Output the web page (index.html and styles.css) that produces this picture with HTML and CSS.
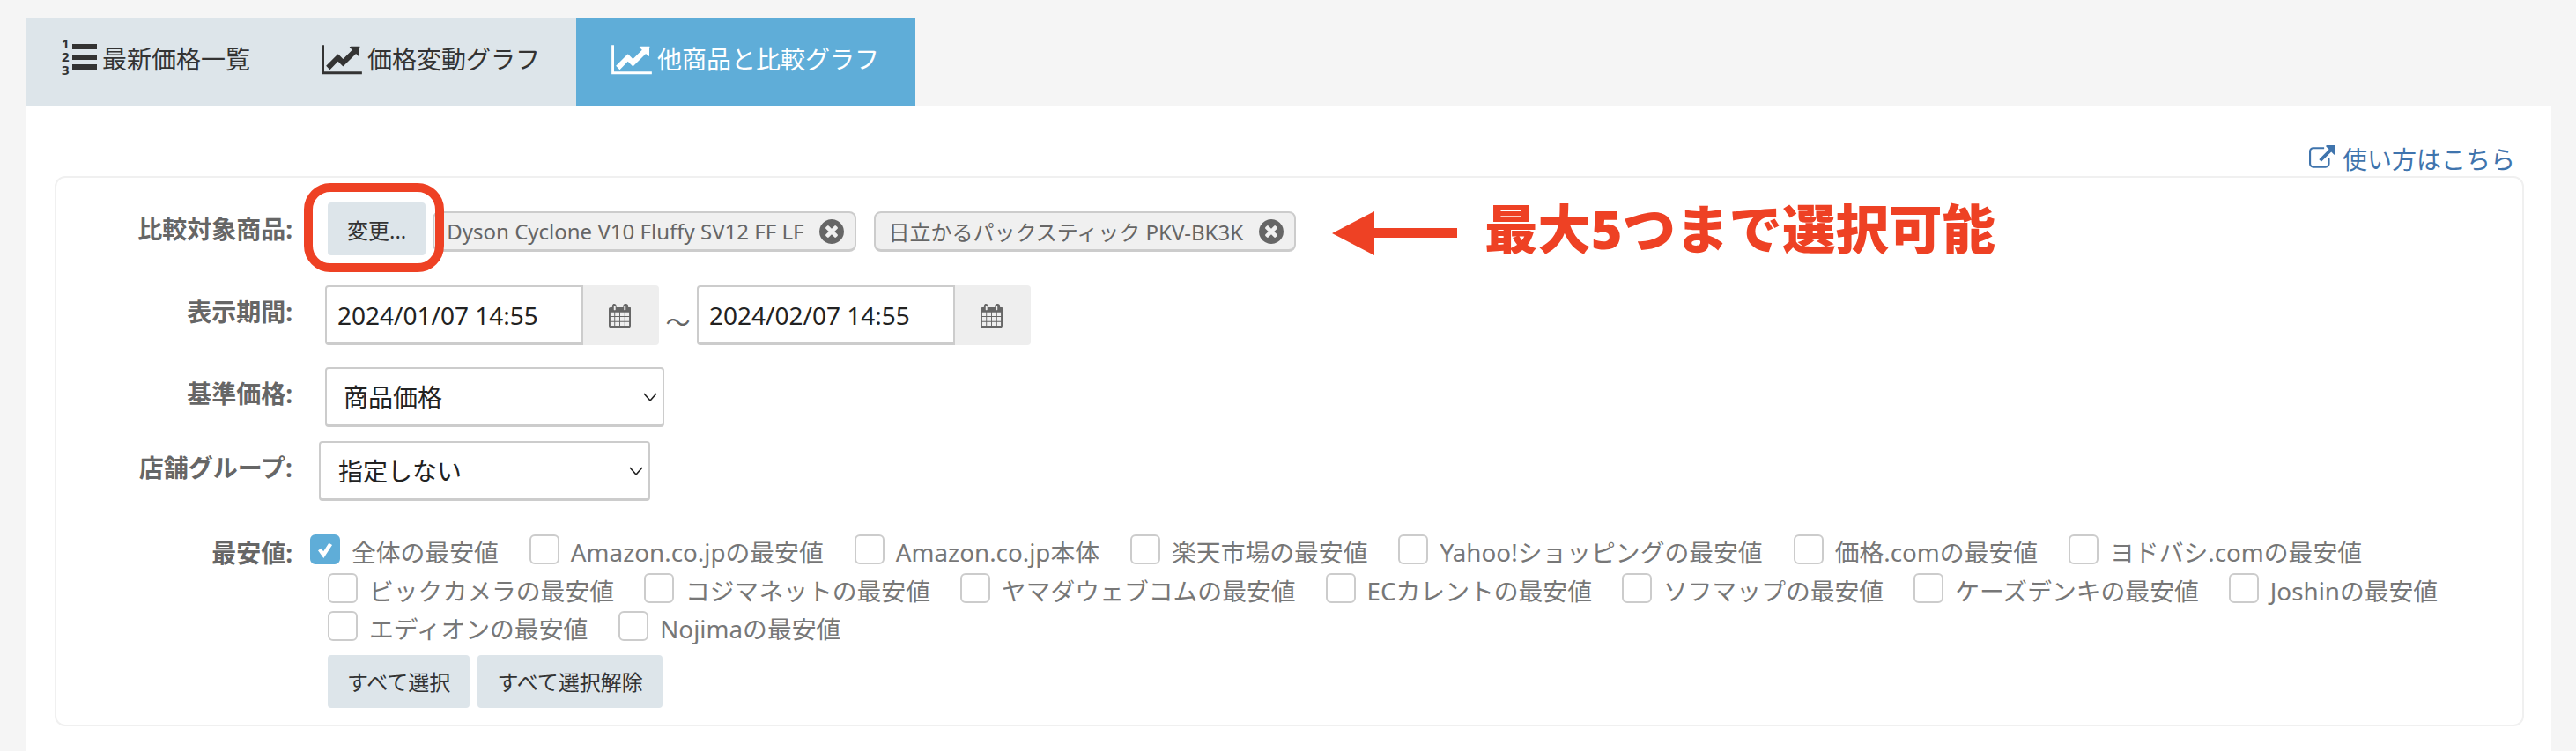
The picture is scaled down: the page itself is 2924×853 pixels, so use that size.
FILE: index.html
```html
<!DOCTYPE html>
<html lang="ja">
<head>
  <meta charset="UTF-8" />
  <title>他商品と比較グラフ</title>
  <link rel="stylesheet" href="styles.css">
</head>
<body>
  <svg class="icon-defs" width="0" height="0">
    <symbol id="i-chart" viewBox="0 0 2048 1792"><path d="M2048 1536v128H0V192h128v1344h1920zM1920 288v435q0 21-19.500 29.500T1865 745l-121-121-633 633q-10 10-23 10t-23-10L832 1024 416 1440l-192-192 585-585q10-10 23-10t23 10l233 233 464-464-121-121q-16-16-7.500-35.500T1491 256h435q14 0 23 9t9 23z"/></symbol>
    <symbol id="i-close" viewBox="128 128 1536 1536"><path d="M1277 1122q0-26-19-45L1077 896l181-181q19-19 19-45 0-27-19-46l-90-90q-19-19-46-19-26 0-45 19L896 715 715 534q-19-19-45-19-27 0-46 19l-90 90q-19 19-19 46 0 26 19 45l181 181-181 181q-19 19-19 45 0 27 19 46l90 90q19 19 46 19 26 0 45-19l181-181 181 181q19 19 45 19 27 0 46-19l90-90q19-19 19-46zm387-226q0 209-103 385.500T1281.500 1561 896 1664t-385.500-103T231 1281.500 128 896t103-385.500T510.500 231 896 128t385.500 103T1561 510.500 1664 896z"/></symbol>
    <symbol id="i-calendar" viewBox="0 0 1664 1792"><path d="M128 1664h288v-288H128v288zm352 0h320v-288H480v288zm-352-352h288V992H128v320zm352 0h320V992H480v320zM128 928h288V640H128v288zm736 736h320v-288H864v288zM480 928h320V640H480v288zm768 736h288v-288h-288v288zm-384-352h320V992H864v320zM512 448V160q0-13-9.500-22.500T480 128h-64q-13 0-22.500 9.500T384 160v288q0 13 9.500 22.500T416 480h64q13 0 22.500-9.500T512 448zm736 864h288V992h-288v320zM864 928h320V640H864v288zm384 0h288V640h-288v288zm32-480V160q0-13-9.500-22.500T1248 128h-64q-13 0-22.500 9.500T1152 160v288q0 13 9.500 22.500t22.500 9.500h64q13 0 22.500-9.500t9.500-22.500zm384-64v1280q0 52-38 90t-90 38H128q-52 0-90-38t-38-90V384q0-52 38-90t90-38h128v-96q0-66 47-113T352 0h64q66 0 113 47t47 113v96h512v-96q0-66 47-113t113-47h64q66 0 113 47t47 113v96h128q52 0 90 38t38 90z"/></symbol>
    <symbol id="i-chevron" viewBox="0 0 16 10"><path d="M1 1l7 8 7-8" fill="none" stroke="#222" stroke-width="1.6"/></symbol>
  </svg>

  <div class="page">
    <div class="tabs">
      <a class="tab">
        <svg class="tab-icon list-icon" viewBox="0 0 40 40">
          <text x="0" y="8" class="list-num">1</text>
          <text x="0" y="23" class="list-num">2</text>
          <text x="0" y="38" class="list-num">3</text>
          <rect x="12" y="3" width="28" height="6"/>
          <rect x="12" y="15" width="28" height="6"/>
          <rect x="12" y="26" width="28" height="6"/>
        </svg>
        最新価格一覧
      </a>
      <a class="tab">
        <svg class="tab-icon"><use href="#i-chart"/></svg>
        価格変動グラフ
      </a>
      <a class="tab active">
        <svg class="tab-icon"><use href="#i-chart"/></svg>
        他商品と比較グラフ
      </a>
    </div>

    <div class="panel">
      <div class="help-row">
        <a class="help-link">
          <svg class="help-icon" viewBox="0 0 1792 1792"><path d="M1408 928v320q0 119-84.500 203.500T1120 1536H288q-119 0-203.500-84.500T0 1248V416q0-119 84.500-203.500T288 128h704q14 0 23 9t9 23v64q0 14-9 23t-23 9H288q-66 0-113 47t-47 113v832q0 66 47 113t113 47h832q66 0 113-47t47-113V928q0-14 9-23t23-9h64q14 0 23 9t9 23zm384-864v512q0 26-19 45t-45 19-45-19l-176-176-652 652q-10 10-23 10t-23-10L695 983q-10-10-10-23t10-23l652-652-176-176q-19-19-19-45t19-45 45-19h512q26 0 45 19t19 45z"/></svg>
          使い方はこちら
        </a>
      </div>

      <div class="box">
        <div class="row row-items">
          <label class="field-label">比較対象商品:</label>
          <div class="change-wrap">
            <button class="btn">変更...</button>
            <span class="red-ring"></span>
          </div>
          <span class="chip">Dyson Cyclone V10 Fluffy SV12 FF LF<svg class="chip-x"><use href="#i-close"/></svg></span>
          <span class="chip">日立かるパックスティック PKV-BK3K<svg class="chip-x"><use href="#i-close"/></svg></span>
          <svg class="note-arrow" viewBox="0 0 142 50"><path d="M0 25L48 0V19H142V30H48V50z"/></svg>
          <span class="note-text">最大5つまで選択可能</span>
        </div>

        <div class="row row-period">
          <label class="field-label">表示期間:</label>
          <div class="date-group">
            <input class="date-input" type="text" value="2024/01/07 14:55">
            <span class="date-addon"><svg class="cal-icon"><use href="#i-calendar"/></svg></span>
          </div>
          <span class="tilde">〜</span>
          <div class="date-group">
            <input class="date-input" type="text" value="2024/02/07 14:55">
            <span class="date-addon"><svg class="cal-icon"><use href="#i-calendar"/></svg></span>
          </div>
        </div>

        <div class="row row-base">
          <label class="field-label">基準価格:</label>
          <div class="select-wrap select-base">
            <select class="select"><option>商品価格</option></select>
            <svg class="chevron"><use href="#i-chevron"/></svg>
          </div>
        </div>

        <div class="row row-group">
          <label class="field-label">店舗グループ:</label>
          <div class="select-wrap select-group">
            <select class="select"><option>指定しない</option></select>
            <svg class="chevron"><use href="#i-chevron"/></svg>
          </div>
        </div>

        <div class="row row-checks">
          <label class="field-label field-label-top">最安値:</label>
          <div class="checks">
            <div class="check-line first">
              <label class="check"><span class="box-mark on"><svg viewBox="0 0 34 34"><path d="M10 17l5 7 9-14" fill="none" stroke="#fff" stroke-width="5"/></svg></span>全体の最安値</label>
              <label class="check"><span class="box-mark"></span>Amazon.co.jpの最安値</label>
              <label class="check"><span class="box-mark"></span>Amazon.co.jp本体</label>
              <label class="check"><span class="box-mark"></span>楽天市場の最安値</label>
              <label class="check"><span class="box-mark"></span>Yahoo!ショッピングの最安値</label>
              <label class="check"><span class="box-mark"></span>価格.comの最安値</label>
              <label class="check"><span class="box-mark"></span>ヨドバシ.comの最安値</label>
            </div>
            <div class="check-line tight">
              <label class="check"><span class="box-mark"></span>ビックカメラの最安値</label>
              <label class="check"><span class="box-mark"></span>コジマネットの最安値</label>
              <label class="check"><span class="box-mark"></span>ヤマダウェブコムの最安値</label>
              <label class="check"><span class="box-mark"></span>ECカレントの最安値</label>
              <label class="check"><span class="box-mark"></span>ソフマップの最安値</label>
              <label class="check"><span class="box-mark"></span>ケーズデンキの最安値</label>
              <label class="check"><span class="box-mark"></span>Joshinの最安値</label>
            </div>
            <div class="check-line">
              <label class="check"><span class="box-mark"></span>エディオンの最安値</label>
              <label class="check"><span class="box-mark"></span>Nojimaの最安値</label>
            </div>
            <div class="check-buttons">
              <button class="btn">すべて選択</button>
              <button class="btn">すべて選択解除</button>
            </div>
          </div>
        </div>
      </div>
    </div>
  </div>
</body>
</html>
```

FILE: styles.css
```css
html, body {
  margin: 0;
  height: 100%;
  overflow: hidden;
}
body {
  font-family: "Noto Sans", "Noto Sans CJK JP", sans-serif;
  font-size: 28px;
  background-color: #f5f5f5;
  color: #333;
}
.icon-defs {
  display: block;
  position: absolute;
}
.page {
  display: flex;
  flex-direction: column;
  height: 100%;
  padding: 20px 28px 0 30px;
  box-sizing: border-box;
}

/* tabs */
.tabs {
  display: flex;
  height: 100px;
  background-color: transparent;
}
.tab {
  display: flex;
  align-items: center;
  gap: 6px;
  padding: 0 41px 6px 40px;
  background-color: #dde5ea;
  color: #333;
  line-height: 40px;
}
.tab.active {
  background-color: #5fadd8;
  color: #fff;
}
.tab-icon {
  width: 46px;
  height: 40px;
  fill: #333;
}
.tab.active .tab-icon {
  fill: #fff;
}
.list-icon {
  width: 40px;
  overflow: visible;
}
.list-num {
  font-size: 15px;
  font-weight: bold;
  font-family: "Noto Sans", sans-serif;
}

/* panel */
.panel {
  flex: 1;
  background-color: #fff;
  padding: 0 31px 0 32px;
}
.help-row {
  display: flex;
  justify-content: flex-end;
  height: 80px;
  padding-right: 10px;
}
.help-link {
  display: flex;
  align-items: center;
  gap: 8px;
  height: 40px;
  margin-top: 40px;
  color: #3f74ad;
}
.help-icon {
  width: 30px;
  height: 30px;
  fill: #3f74ad;
}

.box {
  height: 625px;
  box-sizing: border-box;
  padding-top: 28px;
  border: 2px solid #f0f0f0;
  border-radius: 12px;
}
.row {
  display: flex;
  align-items: flex-start;
}
.row-period {
  margin-top: 34px;
}
.row-base {
  margin-top: 25px;
}
.row-group {
  margin-top: 16px;
}
.row-checks {
  margin-top: 38px;
}
.field-label {
  flex: none;
  width: 268px;
  padding-top: 10px;
  line-height: 40px;
  text-align: right;
  font-weight: bold;
  color: #666;
}
.field-label-top {
  padding-top: 1px;
}

/* buttons */
.btn {
  height: 60px;
  padding: 0 22px;
  border: none;
  border-radius: 4px;
  background-color: #dde5ea;
  color: #333;
  font-family: inherit;
  font-size: 24px;
}
.change-wrap {
  position: relative;
  margin-left: 40px;
}
.change-wrap .btn {
  display: block;
}
.red-ring {
  position: absolute;
  top: -22px;
  right: -21px;
  bottom: -19px;
  left: -27px;
  border: 10px solid #ee4124;
  border-radius: 30px;
  z-index: 2;
}

/* chips */
.chip {
  display: flex;
  align-items: center;
  gap: 18px;
  box-sizing: border-box;
  height: 46px;
  margin-top: 10px;
  margin-left: 20px;
  padding: 0 12px 0 14px;
  background-color: #f0f0f0;
  border: 2px solid #ccc;
  border-bottom-width: 3px;
  border-radius: 8px;
  color: #666;
  font-size: 24px;
}
.change-wrap + .chip {
  margin-left: 8px;
}
.chip-x {
  width: 28px;
  height: 28px;
  fill: #666;
}
.note-arrow {
  flex: none;
  width: 142px;
  height: 50px;
  margin: 10px 31px 0 41px;
  fill: #ee4124;
}
.note-text {
  color: #ee4124;
  font-size: 60.5px;
  font-weight: 900;
  line-height: 60px;
}

/* date range */
.date-group {
  display: flex;
  margin-left: 37px;
}
.tilde + .date-group {
  margin-left: 0;
}
.date-input {
  width: 293px;
  height: 68px;
  box-sizing: border-box;
  padding: 0 12px;
  border: 2px solid #ccc;
  border-bottom-width: 3px;
  border-radius: 4px 0 0 4px;
  font-family: inherit;
  font-size: 28px;
  color: #222;
}
.date-addon {
  display: flex;
  align-items: center;
  justify-content: center;
  box-sizing: border-box;
  width: 86px;
  height: 68px;
  padding-right: 3px;
  background-color: #eee;
  border-radius: 0 4px 4px 0;
}
.cal-icon {
  width: 25px;
  height: 27px;
  fill: #666;
}
.tilde {
  width: 43px;
  margin-top: 22px;
  text-align: center;
  color: #666;
  line-height: 40px;
}

/* selects */
.select-wrap {
  position: relative;
}
.select-base {
  margin-left: 37px;
}
.select-group {
  margin-left: 30px;
}
.select {
  display: block;
  height: 68px;
  box-sizing: border-box;
  padding: 0 0 0 19px;
  border: 2px solid #ccc;
  border-bottom-width: 3px;
  border-radius: 4px;
  background-color: #fff;
  appearance: none;
  font-family: inherit;
  font-size: 28px;
  color: #222;
}
.select-base .select {
  width: 385px;
}
.select-group .select {
  width: 376px;
  padding-left: 20px;
}
.chevron {
  position: absolute;
  top: 29px;
  right: 8px;
  width: 16px;
  height: 10px;
  pointer-events: none;
}

/* checkboxes */
.checks {
  margin-left: 40px;
}
.check-line {
  display: flex;
  height: 43.5px;
}
.check-line.first {
  margin-left: -20px;
}
.check {
  display: flex;
  align-items: flex-start;
  margin-right: 35px;
  color: #777;
  font-size: 27.8px;
  line-height: 40px;
}
.check-line.tight .check {
  margin-right: 34px;
}
.box-mark {
  display: block;
  flex: none;
  box-sizing: border-box;
  width: 34px;
  height: 34px;
  margin-right: 13px;
  border: 2px solid #ccc;
  border-radius: 6px;
  background-color: #fff;
}
.box-mark.on {
  border-color: #5fadd8;
  background-color: #5fadd8;
}
.box-mark svg {
  display: block;
  width: 30px;
  height: 30px;
}
.check-buttons {
  display: flex;
  gap: 9px;
  margin-top: 6px;
}
```
